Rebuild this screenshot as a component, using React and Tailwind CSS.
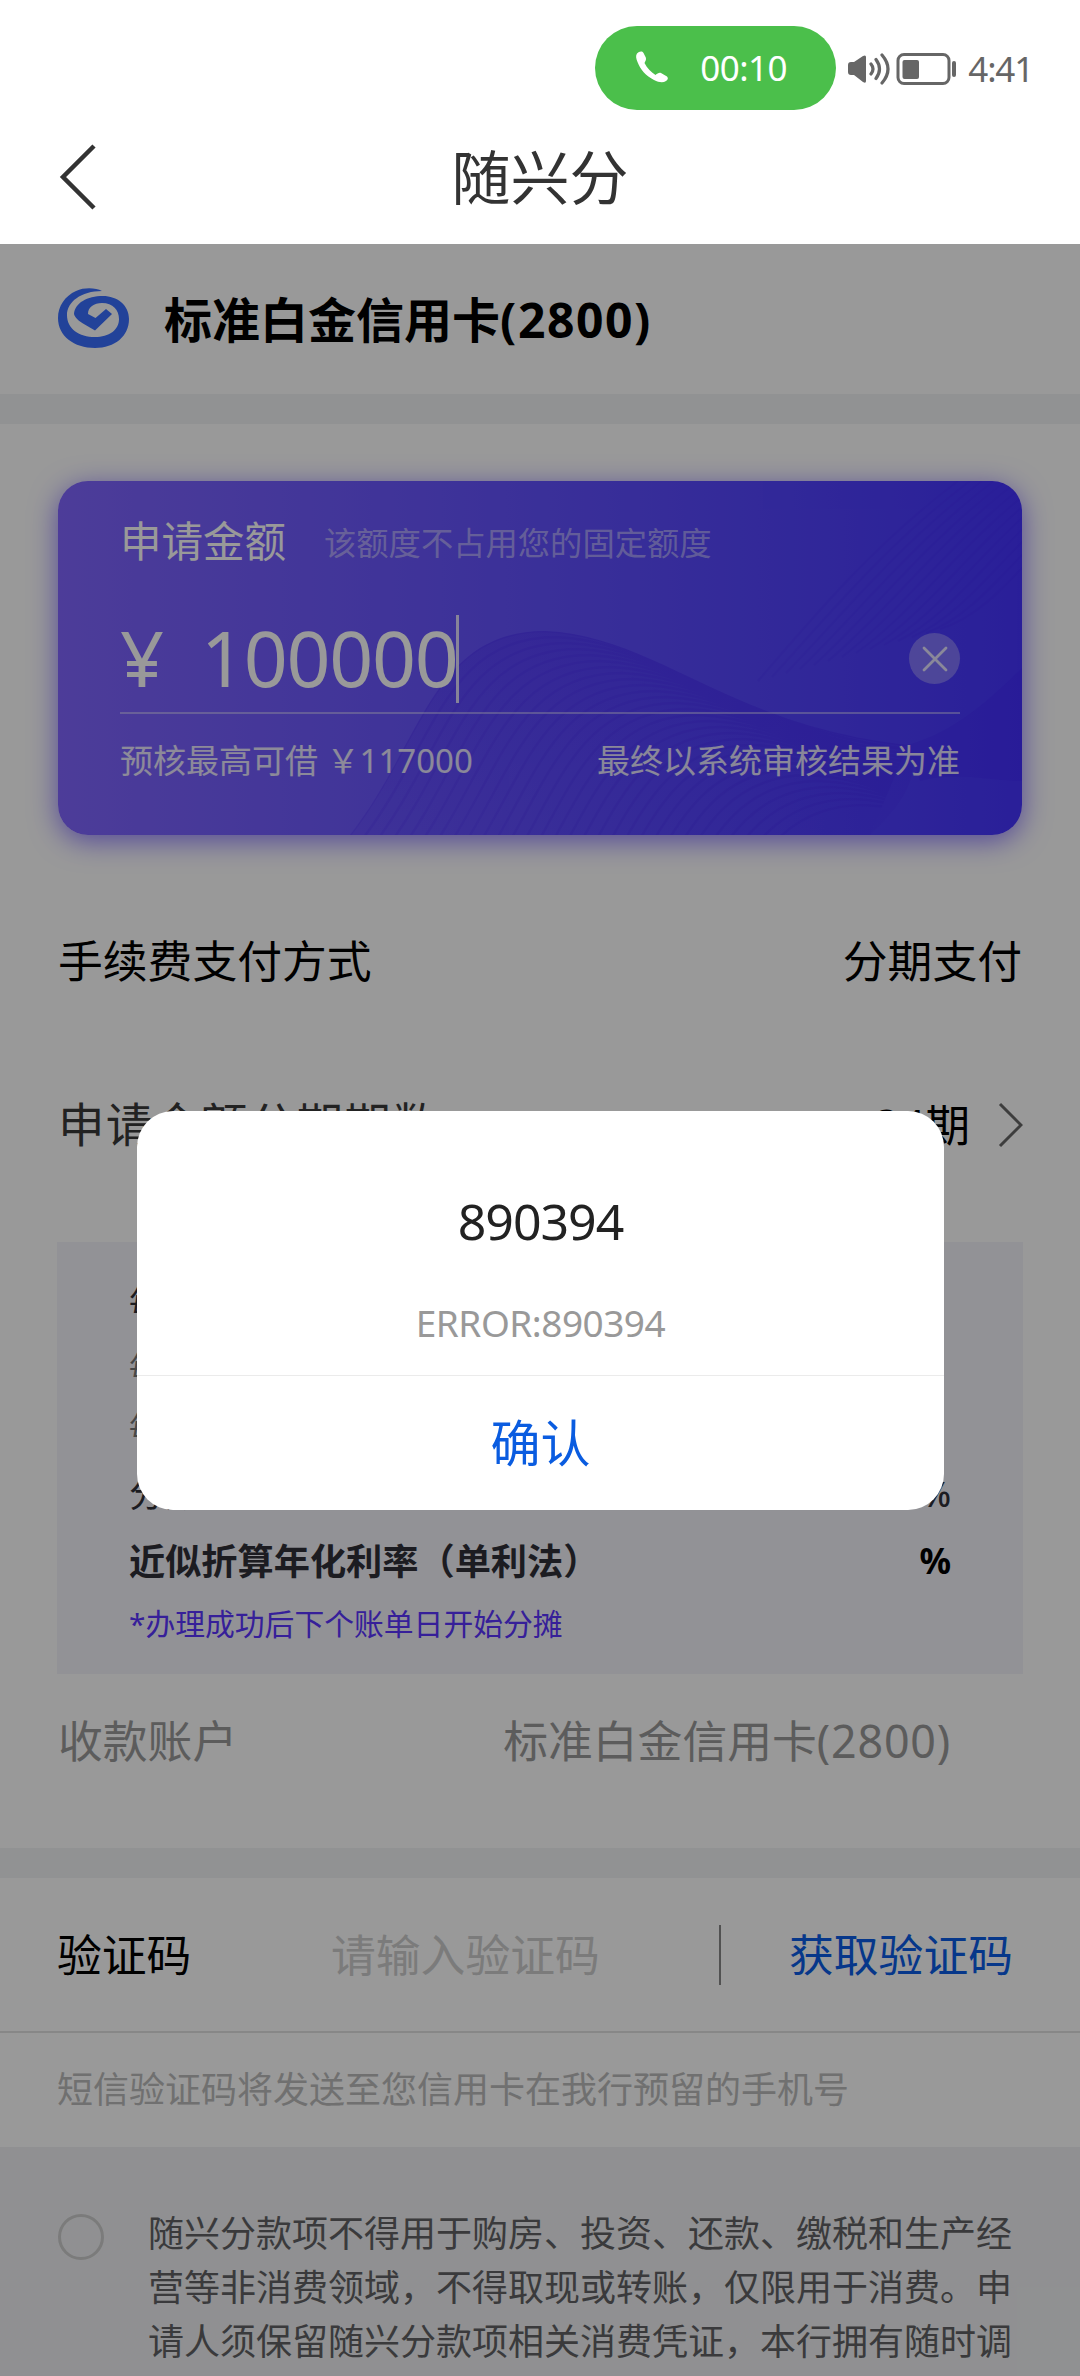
import { useState } from 'react';

// Wave lines inside the amount card, shifted copies of one ridge
const WAVE_LINES = Array.from({ length: 30 }, (_, i) => i);

const TERMS = [
  '随兴分款项不得用于购房、投资、还款、缴税和生产经',
  '营等非消费领域，不得取现或转账，仅限用于消费。申',
  '请人须保留随兴分款项相关消费凭证，本行拥有随时调',
];

function StatusBar() {
  return (
    <div className="flex h-[110px] items-end justify-end pr-[47px]">
      <div className="flex h-[84px] w-[241px] items-center rounded-full bg-[#4bbf4b] pl-[40px] text-white">
        <svg width="36" height="36" viewBox="0 0 36 36" fill="currentColor">
          <path d="M2 3.500C4 1.500 7 0.500 8.500 3L10.800 7.500C11.500 9.500 10.500 11 9.500 13C12 18 16.500 22.500 20.500 25C22.500 23.500 24 22.300 26 23L32 26.500C33.500 28 33 29.500 31 31C28 33 24 32.500 19 30C11 26 5 19 2.500 12C1 8.500 0.500 5.500 2 3.500Z" />
        </svg>
        <span className="ml-[29px] pt-px text-[35px] tracking-[-0.6px]">00:10</span>
      </div>
      <div className="flex h-[84px] items-center pt-px text-[#666]">
        <svg className="ml-[12px]" width="42" height="34" viewBox="0 0 42 34" fill="none">
          <path d="M0 13q0-3 3-3h3L15 4q3-1.500 3 1v24q0 3-3 1L6 23H3q-3 0-3-3z" fill="currentColor" />
          <path d="M23 12q4 5 0 10M28 7.500q7 9.500 0 19M34 3q12 14 0 28" stroke="currentColor" strokeWidth="3.200" strokeLinecap="round" />
        </svg>
        <svg className="ml-[6px]" width="62" height="34" viewBox="0 0 62 34" fill="none">
          <rect x="2" y="2.500" width="51" height="29" rx="6" stroke="currentColor" strokeWidth="3" />
          <rect x="6.500" y="8" width="16.500" height="19" rx="2" fill="currentColor" />
          <rect x="56" y="9" width="4" height="16" rx="2" fill="currentColor" />
        </svg>
        <span className="ml-[10px] pt-px text-[35px] tracking-[-1.2px]">4:41</span>
      </div>
    </div>
  );
}

function NavBar() {
  return (
    <div className="flex h-[134px] items-center justify-between px-[57px] text-[#333]">
      <svg width="40" height="68" viewBox="0 0 40 68" fill="none">
        <path d="M37 3L6 34L37 65" stroke="currentColor" strokeWidth="4.500" />
      </svg>
      <h1 className="text-[59px]">随兴分</h1>
      <div className="w-[40px]" />
    </div>
  );
}

function BankLogo() {
  return (
    <svg width="74" height="62" viewBox="0 0 74 62">
      <path
        fill="#3a6eff"
        d="M45 3C39 0 28-1 19 3C8 8 1 18 1 30C1 48 17 60 38 60C58 60 72 48 72 31C72 17 60 8 46 8C30 8 18 15 17 26C18 30 22 33 26 35.500L38 42.500L55 26L49 21L38.500 30L31 26C31 19 37 15 45 15C56 15 62 22 62 31C62 42 52 49 38 49C22 49 10 41 10 27C10 14 24 3 45 3Z"
      />
    </svg>
  );
}

function CardWaves() {
  return (
    <svg className="absolute inset-0" width="965" height="354" viewBox="0 0 965 354" fill="none">
      <defs>
        <clipPath id="wave">
          <path d="M292 354C365 260 375 150 487 150C600 155 670 245 850 264L812 354Z" />
        </clipPath>
        <linearGradient id="waveFade" x1="0" y1="0" x2="0" y2="1">
          <stop offset="0" stopColor="#3a18f0" stopOpacity="0.24" />
          <stop offset="1" stopColor="#3a18f0" stopOpacity="0.08" />
        </linearGradient>
      </defs>
      <path d="M292 354C365 260 375 150 487 150C600 155 670 245 850 264Q870 300 812 354Z" fill="url(#waveFade)" />
      <g clipPath="url(#wave)" stroke="#3a14e8" strokeWidth="2.500" opacity="0.12">
        {WAVE_LINES.map((i) => (
          <path
            key={i}
            d="M292 354C365 260 375 150 487 150C600 155 670 245 850 264"
            transform={`translate(${i * 11} ${i * 6})`}
          />
        ))}
      </g>
      <path d="M850 264C900 250 935 215 965 186V300C930 300 900 290 862 300Z" fill="#3a10f0" opacity="0.14" />
      <g stroke="#3a14f0" strokeWidth="2" opacity="0.1">
        {WAVE_LINES.slice(0, 14).map((i) => (
          <path key={i} d={`M${700 + i * 14} ${200 - i * 4}C${760 + i * 14} 130 ${820 + i * 12} 60 ${900 + i * 12} 0`} />
        ))}
      </g>
    </svg>
  );
}

function AmountCard({ amount, onClear }) {
  return (
    <div className="relative mx-[58px] mt-[57px] h-[354px] rounded-[30px] bg-gradient-to-r from-[#8065ff] to-[#4634ff] shadow-[0_6px_28px_rgba(80,50,255,0.65)]">
      <div className="absolute inset-0 overflow-hidden rounded-[30px]">
        <CardWaves />
      </div>
      <div className="relative px-[62px] pt-[31px] text-white">
        <div className="flex h-[60px] items-center">
          <span className="text-[41.5px] leading-none">申请金额</span>
          <span className="ml-[38px] text-[32.3px] leading-none text-white/45">该额度不占用您的固定额度</span>
        </div>
        <div className="mt-[33px] flex h-[109px] items-center border-b-2 border-white/40">
          <span className="w-[81px] pb-[3px] text-[77px] leading-none">¥</span>
          <span className="pb-[3px] text-[77px] leading-none tracking-[-1.3px]">{amount}</span>
          <div className="-ml-px h-[88px] w-[3px] bg-white/80" />
          <button onClick={onClear} className="ml-auto flex size-[51px] items-center justify-center rounded-full bg-white/30">
            <svg width="28" height="28" viewBox="0 0 28 28" fill="none">
              <path d="M3 3L25 25M25 3L3 25" stroke="white" strokeWidth="2.800" opacity="0.8" strokeLinecap="round" />
            </svg>
          </button>
        </div>
        <div className="flex h-[93px] items-center justify-between text-[33px] text-white/85">
          <span>预核最高可借 ￥117000</span>
          <span>最终以系统审核结果为准</span>
        </div>
      </div>
    </div>
  );
}

function ErrorDialog({ code, onClose }) {
  return (
    <div className="absolute left-[137px] top-[1111px] h-[399px] w-[807px] overflow-hidden rounded-[36px] bg-white text-center">
      <div className="flex h-[264px] flex-col items-center pt-[76px]">
        <div className="h-[68px] text-[50px] leading-[68px] tracking-[-1px] text-[#222]">{code}</div>
        <div className="mt-[43px] h-[50px] text-[37px] leading-[50px] tracking-[-0.5px] text-[#999]">ERROR:{code}</div>
      </div>
      <button onClick={onClose} className="h-[135px] w-full border-t border-[#ebebeb] text-[50px] text-[#0a5ce0]">
        确认
      </button>
    </div>
  );
}

export default function App() {
  const [amount, setAmount] = useState('100000');
  const [open, setOpen] = useState(true);

  return (
    <div className="relative h-[2376px] w-[1080px] overflow-hidden bg-white font-['Noto_Sans','Noto_Sans_CJK_SC',sans-serif] text-black">
      <StatusBar />
      <NavBar />

      {/* Card header */}
      <div className="flex h-[150px] items-center gap-[33px] px-[57px]">
        <BankLogo />
        <div className="pt-px text-[48px] font-bold">
          标准白金信用卡<span className="tracking-[1.6px]">(2800)</span>
        </div>
      </div>
      <div className="h-[30px] bg-[#f2f3f5]" />

      <AmountCard amount={amount} onClear={() => setAmount('')} />

      {/* Fee and periods */}
      <div className="mt-[76px] flex h-[100px] items-center justify-between px-[58px] text-[44.8px]">
        <span>手续费支付方式</span>
        <span>分期支付</span>
      </div>
      <div className="mt-[64px] flex h-[100px] items-center px-[57px] text-[44.8px]">
        <span className="pl-px text-[46.5px] tracking-[1.2px] text-[#393939]">申请金额分期期数</span>
        <span className="ml-auto flex items-center">
          <span className="pt-[2px]">24</span>
          <span>期</span>
        </span>
        <svg className="ml-[28px]" width="25" height="46" viewBox="0 0 25 46" fill="none">
          <path d="M2 2L23 23L2 44" stroke="#666" strokeWidth="3" />
        </svg>
      </div>

      {/* Installment details */}
      <div className="mx-[57px] mt-[67px] h-[432px] bg-[#f3f3fb] px-[72px] pt-[30px] text-[#303038]">
        <div className="flex h-[60px] items-center text-[33px]">每期应还</div>
        <div className="flex h-[68px] items-center text-[30px] text-[#777]">每期本金</div>
        <div className="flex h-[52px] items-center text-[30px] text-[#777]">每期手续费</div>
        <div className="flex h-[84px] items-center justify-between text-[36px]">
          <span>分期手续费率</span>
          <span className="text-[34px] font-medium">%</span>
        </div>
        <div className="flex h-[50px] items-center justify-between text-[36.2px] font-bold">
          <span>近似折算年化利率（单利法）</span>
          <span className="text-[35px] text-black">%</span>
        </div>
        <div className="flex h-[77px] items-center text-[29.8px] text-[#5a35ff]">*办理成功后下个账单日开始分摊</div>
      </div>

      {/* Receiving account */}
      <div className="flex h-[174px] justify-between pl-[58px] pr-[129px] pt-[36px] text-[44.8px] leading-[62px] text-[#999]">
        <span>收款账户</span>
        <span>标准白金信用卡<span className="tracking-[0.8px]">(2800)</span></span>
      </div>
      <div className="h-[30px] bg-[#f2f3f5]" />

      {/* Verification code */}
      <div className="flex h-[155px] items-center border-b-2 border-[#e2e2e2] pl-[57px] text-[44.8px]">
        <span className="w-[274px]">验证码</span>
        <span className="w-[388px] text-[#cdcdcd]">请输入验证码</span>
        <div className="h-[60px] w-[2px] bg-[#888]" />
        <span className="ml-[68px] text-[#0a5ce6]">获取验证码</span>
      </div>
      <div className="flex h-[114px] items-center pl-[57px] text-[36px] text-[#bbb]">
        短信验证码将发送至您信用卡在我行预留的手机号
      </div>

      {/* Terms */}
      <div className="flex h-[229px] bg-[#f0f1f3] pl-[58px] pt-[60px]">
        <div className="mt-[7px] size-[46px] rounded-full border-[3px] border-[#cdcdcd]" />
        <div className="ml-[44px] whitespace-nowrap text-[36px] leading-[54px] text-[#626264]">
          {TERMS.map((line) => (
            <p key={line}>{line}</p>
          ))}
        </div>
      </div>

      {/* Mask and dialog */}
      {open && (
        <>
          <div className="absolute inset-x-0 bottom-0 top-[244px] bg-black/40" />
          <ErrorDialog code="890394" onClose={() => setOpen(false)} />
        </>
      )}
    </div>
  );
}
